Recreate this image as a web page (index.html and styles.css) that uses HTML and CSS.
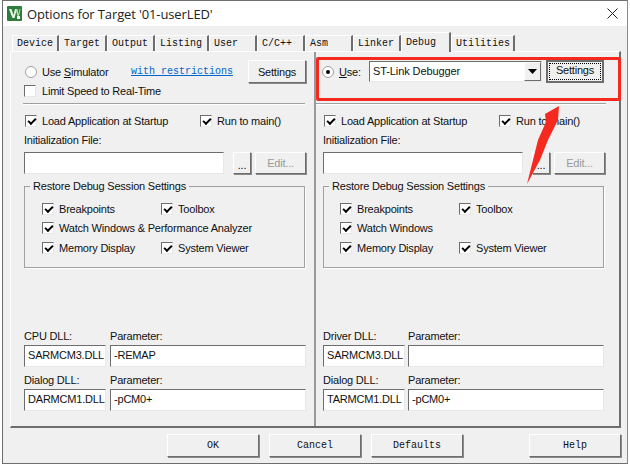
FILE: index.html
```html
<!DOCTYPE html>
<html lang="en">
<head>
<meta charset="utf-8">
<title>Options for Target</title>
<link rel="stylesheet" href="styles.css">
</head>
<body>
<div class="dialog">
  <header class="titlebar">
    <svg class="appicon" width="15" height="15" viewBox="0 0 15 15"><rect width="15" height="15" rx="1" fill="#2f7d3a"/><path d="M2 3h2.500l2 6 1.500-6h2l-2.500 9H5.500z" fill="#e8f3e4"/><path d="M8.500 3h2l1 5 1-5h1l-1.500 7h-1.500z" fill="#b9d9b0"/><rect x="10" y="10" width="3" height="3" fill="#f4f4f4"/></svg>
    <span class="titletext">Options for Target '01-userLED'</span>
    <svg class="closex" width="11" height="11" viewBox="0 0 11 11"><path d="M.5.500l10 10M10.500.500l-10 10" stroke="#222" stroke-width="1" fill="none"/></svg>
  </header>
  <nav class="tabs">
    <span class="tab w-device">Device</span>
    <span class="tab w-target">Target</span>
    <span class="tab w-output">Output</span>
    <span class="tab w-listing">Listing</span>
    <span class="tab w-user">User</span>
    <span class="tab w-cc">C/C++</span>
    <span class="tab w-asm">Asm</span>
    <span class="tab w-linker">Linker</span>
    <span class="tab active w-debug">Debug</span>
    <span class="tab w-util">Utilities</span>
  </nav>
  <main class="panel">
    <section class="col col-left">
      <div class="top">
        <div class="row r1">
          <span class="radio"></span><span class="lbl sim">Use <u>S</u>imulator</span>
          <a class="link">with restrictions</a>
          <span class="btn settings">Settings</span>
        </div>
        <div class="row r2"><span class="check"></span><span class="lbl">Limit Speed to Real-Time</span></div>
      </div>
      <div class="rule"></div>
      <div class="loadrow">
        <span class="pair p-load"><span class="check on"></span><span class="lbl">Load Application at Startup</span></span>
        <span class="pair"><span class="check on"></span><span class="lbl">Run to main()</span></span>
      </div>
      <div class="cap init">Initialization File:</div>
      <div class="filerow">
        <span class="field file"></span><span class="btn dots">...</span><span class="btn edit">Edit...</span>
      </div>
      <fieldset class="group">
        <legend>Restore Debug Session Settings</legend>
        <div class="grow"><span class="pair p-a"><span class="check on"></span><span class="lbl">Breakpoints</span></span><span class="pair"><span class="check on"></span><span class="lbl">Toolbox</span></span></div>
        <div class="grow"><span class="pair"><span class="check on"></span><span class="lbl">Watch Windows &amp; Performance Analyzer</span></span></div>
        <div class="grow"><span class="pair p-a"><span class="check on"></span><span class="lbl">Memory Display</span></span><span class="pair"><span class="check on"></span><span class="lbl">System Viewer</span></span></div>
      </fieldset>
      <div class="dll">
        <div class="caps"><span class="cap c1">CPU DLL:</span><span class="cap">Parameter:</span></div>
        <div class="fields"><span class="field f1">SARMCM3.DLL</span><span class="field f2">-REMAP</span></div>
        <div class="caps"><span class="cap c1">Dialog DLL:</span><span class="cap">Parameter:</span></div>
        <div class="fields"><span class="field f1">DARMCM1.DLL</span><span class="field f2">-pCM0+</span></div>
      </div>
    </section>
    <section class="col col-right">
      <div class="top">
        <div class="row r1">
          <span class="radio on"></span><span class="lbl use"><u>U</u>se:</span>
          <span class="combo"><span class="combotext">ST-Link Debugger</span><span class="arrowbtn"><svg width="9" height="5" viewBox="0 0 9 5"><path d="M0 0h9L4.500 5z" fill="#000"/></svg></span></span>
          <span class="btn settings focus"><span class="focusring">Settings</span></span>
        </div>
      </div>
      <div class="rule"></div>
      <div class="loadrow">
        <span class="pair p-load"><span class="check on"></span><span class="lbl">Load Application at Startup</span></span>
        <span class="pair"><span class="check on"></span><span class="lbl">Run to main()</span></span>
      </div>
      <div class="cap init">Initialization File:</div>
      <div class="filerow">
        <span class="field file"></span><span class="btn dots">...</span><span class="btn edit">Edit...</span>
      </div>
      <fieldset class="group">
        <legend>Restore Debug Session Settings</legend>
        <div class="grow"><span class="pair p-a"><span class="check on"></span><span class="lbl">Breakpoints</span></span><span class="pair"><span class="check on"></span><span class="lbl">Toolbox</span></span></div>
        <div class="grow"><span class="pair"><span class="check on"></span><span class="lbl">Watch Windows</span></span></div>
        <div class="grow"><span class="pair p-a"><span class="check on"></span><span class="lbl">Memory Display</span></span><span class="pair"><span class="check on"></span><span class="lbl">System Viewer</span></span></div>
      </fieldset>
      <div class="dll">
        <div class="caps"><span class="cap c1">Driver DLL:</span><span class="cap">Parameter:</span></div>
        <div class="fields"><span class="field f1">SARMCM3.DLL</span><span class="field f2"></span></div>
        <div class="caps"><span class="cap c1">Dialog DLL:</span><span class="cap">Parameter:</span></div>
        <div class="fields"><span class="field f1">TARMCM1.DLL</span><span class="field f2">-pCM0+</span></div>
      </div>
    </section>
  </main>
  <footer class="footer">
    <span class="btn fbtn">OK</span><span class="btn fbtn">Cancel</span><span class="btn fbtn">Defaults</span><span class="btn fbtn help">Help</span>
  </footer>
</div>
<div class="redbox"></div>
<svg class="redarrow" width="50" height="90" viewBox="0 0 50 90"><path d="M39 6L38 20 28 40 20 60 7 84 13 60 18 40 26 22 25 14z" fill="#f5291f"/></svg>
</body>
</html>
```
FILE: styles.css
```css
* { box-sizing: border-box; }
html, body { margin: 0; padding: 0; }
body {
  width: 630px; height: 467px; overflow: hidden; position: relative;
  background: #fff;
  font-family: "Liberation Sans", Arial, sans-serif;
  font-size: 11px; letter-spacing: -0.2px; color: #111;
}
.dialog {
  margin-left: 2px; width: 626px; height: 464px;
  background: #f0f0f0;
  border: 1px solid #6e6e6e; border-right-color: #8a8a8a;
  display: flex; flex-direction: column;
}
.titlebar {
  height: 25px; background: #fff; display: flex; align-items: center;
  padding: 0 9px 0 4px; flex: none;
}
.appicon { margin-right: 5px; }
.titletext { font-family: "Open Sans", sans-serif; font-size: 13px; letter-spacing: -0.12px; flex: 1; color: #222; }
.tabs {
  height: 25px; flex: none; display: flex; align-items: flex-end; padding-left: 9px;
  font-family: "Liberation Mono", monospace; font-size: 10px; letter-spacing: 0;
}
.tab {
  height: 16px; padding: 2px 0 0 4px; border-right: 2px solid #6d6d6d;
  border-top: 1px solid #fff; border-left: 1px solid #fff;
  color: #111; background: #f0f0f0; white-space: nowrap;
}
.w-device { width: 47px; } .w-target { width: 48px; } .w-output { width: 48px; }
.w-listing { width: 54px; } .w-user { width: 48px; } .w-cc { width: 48px; }
.w-asm { width: 48px; } .w-linker { width: 48px; }
.w-debug { width: 50px; } .w-util { width: 64px; }
.active { height: 20px; padding-top: 4px; margin-bottom: -1px; position: relative; z-index: 1; }
.panel {
  margin-left: 7px; width: 611px; height: 377px; flex: none;
  border: 1px solid #fff; border-right: 2px solid #6d6d6d; border-bottom: 2px solid #6d6d6d;
  display: flex;
}
.col { width: 303px; padding-left: 13px; display: flex; flex-direction: column; flex: none; }
.col-right { border-left: 2px solid #999; width: 305px; padding-left: 7px; }
.top { height: 51px; padding-top: 8px; }
.row { display: flex; align-items: center; }
.r1 { height: 23px; }
.r2 { height: 16px; }
.radio {
  width: 12px; height: 12px; border-radius: 50%; background: #fff; border: 1px solid #a0a0a0;
  margin-left: 1px; position: relative; flex: none;
}
.col-right .radio { margin-left: -1px; }
.radio.on::after {
  content: ""; position: absolute; left: 3px; top: 3px; width: 4px; height: 4px; border-radius: 50%; background: #000;
}
.check {
  width: 12px; height: 12px; background: #fff; flex: none; display: inline-block;
  border: 1px solid; border-color: #6d6d6d #e8e8e8 #e8e8e8 #6d6d6d; position: relative;
}
.check.on::after {
  content: ""; position: absolute; left: 2px; top: 2px; width: 6px; height: 3px;
  border-left: 2px solid #000; border-bottom: 2px solid #000; transform: rotate(-45deg);
}
.lbl { margin-left: 5px; white-space: nowrap; }
.r2 .lbl { margin-left: 6px; }
.sim { width: 89px; flex: none; }
.link { font-family: "Liberation Mono", monospace; font-size: 10px; letter-spacing: 0; color: #0066cc; text-decoration: underline; margin-right: 15px; }
.btn {
  display: inline-flex; align-items: center; justify-content: center; background: #f0f0f0;
  border: 1px solid; border-color: #fff #6d6d6d #6d6d6d #fff;
  box-shadow: 1px 1px 0 #8a8a8a;
  white-space: nowrap;
}
.settings { width: 58px; height: 23px; flex: none; }
.focus { border: 2px solid #6d6d6d; padding: 1px; margin-left: 4px; box-shadow: none; }
.focusring { flex: 1; text-align: center; border: 1px dotted #000; height: 100%; line-height: 13px; }
.use { width: 30px; flex: none; }
.combo {
  width: 173px; height: 21px; background: #fff; display: flex; align-items: center; flex: none;
  border: 1px solid; border-color: #6d6d6d #e8e8e8 #e8e8e8 #6d6d6d;
}
.combotext { flex: 1; padding: 0 0 1px 3px; letter-spacing: -0.1px; }
.arrowbtn {
  width: 17px; height: 19px; display: flex; align-items: center; justify-content: center;
  background: #f0f0f0; border: 1px solid; border-color: #fff #6d6d6d #6d6d6d #fff;
}
.rule { width: 282px; margin-left: -1px; border-top: 1px solid #a0a0a0; border-bottom: 1px solid #fff; height: 2px; }
.col-right .rule { width: 290px; margin-left: -7px; }
.loadrow { display: flex; height: 18px; margin-top: 7px; align-items: center; }
.pair { display: inline-flex; align-items: center; }
.loadrow .pair { margin-left: 1px; }
.p-load { width: 174px; flex: none; }
.cap { white-space: nowrap; }
.init { margin-top: 3px; height: 15px; line-height: 15px; }
.filerow { display: flex; margin-top: 4px; height: 22px; }
.field {
  background: #fff; border: 1px solid; border-color: #6d6d6d #e8e8e8 #e8e8e8 #6d6d6d; display: block;
  padding-left: 3px; line-height: 18px; white-space: nowrap; flex: none;
}
.file { width: 200px; height: 22px; }
.dots { width: 18px; height: 22px; margin-left: 9px; align-items: flex-end; padding-bottom: 2px; }
.edit { width: 51px; height: 22px; margin-left: 4px; color: #9a9a9a; }
.group {
  margin: 5px 0 0 0; padding: 6px 0 0 17px; width: 281px; height: 89px;
  border: 1px solid #a0a0a0; box-shadow: 1px 1px 0 #fff; min-inline-size: 0;
}
.col-right .group { padding-left: 16px; }
.group legend { padding: 0 3px; margin-left: -12px; line-height: 14px; }
.col-right .group legend { margin-left: -11px; }
.grow { display: flex; height: 19.500px; align-items: center; }
.p-a { width: 119px; flex: none; }
.dll { margin-top: auto; padding-bottom: 10px; }
.caps { display: flex; height: 17px; align-items: center; padding-bottom: 1px; }
.c1 { width: 85px; flex: none; }
.col-left .c1 { width: 86px; }
.fields { display: flex; height: 22px; gap: 3px; margin-bottom: 5px; }
.col-left .fields { gap: 4px; }
.f1 { width: 82px; }
.f2 { width: 196px; }
.footer {
  flex: 1; display: flex; padding: 6px 0 0 164px; align-items: flex-start;
  font-family: "Liberation Mono", monospace; font-size: 10px; letter-spacing: 0;
}
.fbtn { width: 92px; height: 23px; margin-right: 10px; }
.help { margin-left: 56px; margin-right: 0; }
.redbox {
  position: absolute; left: 316px; top: 57px; width: 305px; height: 44px;
  border: 3px solid #f5291f; border-radius: 2px;
}
.redarrow { position: absolute; left: 520px; top: 100px; }
```
